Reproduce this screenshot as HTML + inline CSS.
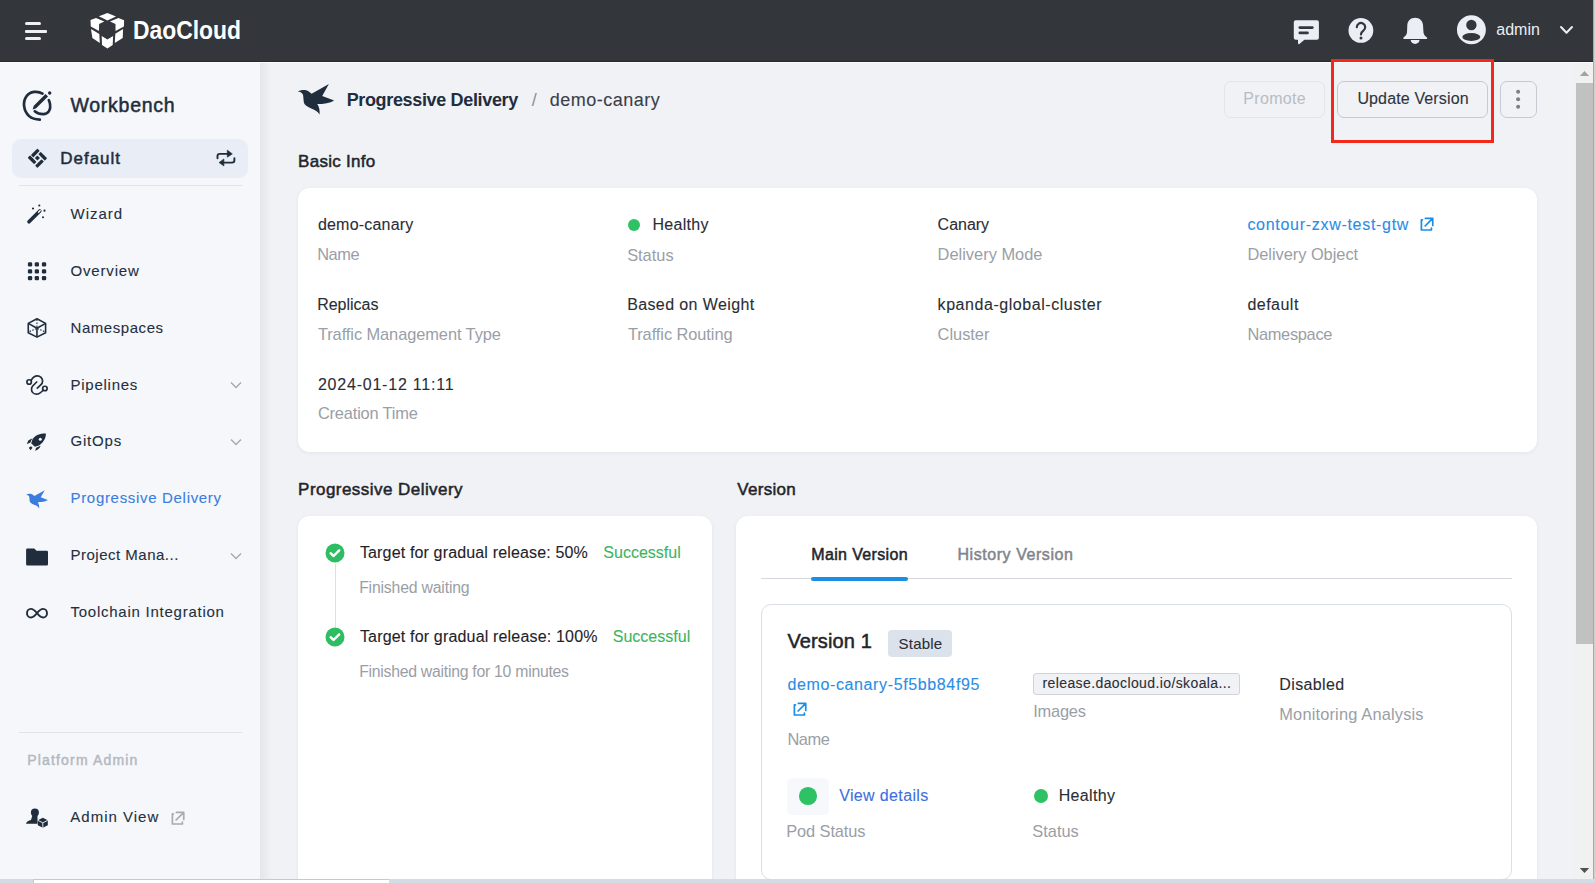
<!DOCTYPE html>
<html><head><meta charset="utf-8">
<style>
*{margin:0;padding:0;box-sizing:border-box}
html,body{width:1595px;height:883px;overflow:hidden;background:#f0f2f6;font-family:"Liberation Sans", sans-serif}
.t{position:absolute;white-space:nowrap;line-height:1}
.a{position:absolute}
</style></head><body>
<!-- header -->
<div class="a" style="left:0;top:0;width:1595px;height:61px;background:#33363b"></div>
<div class="a" style="left:0;top:61px;width:1595px;height:1px;background:#26282c"></div>
<div class="a" style="left:0;top:62px;width:1595px;height:1px;background:#fdfdfe"></div>
<!-- hamburger -->
<div class="a" style="left:25px;top:22px;width:16px;height:3px;border-radius:1.5px;background:#eef0f6"></div>
<div class="a" style="left:25px;top:30px;width:22px;height:2.5px;border-radius:1px;background:#eef0f6"></div>
<div class="a" style="left:25px;top:37px;width:16px;height:3px;border-radius:1.5px;background:#eef0f6"></div>
<!-- logo cube -->
<svg class="a" style="left:86px;top:10px" width="42" height="42" viewBox="0 0 42 42">
<g fill="#ffffff">
<polygon points="12.9,6.2 21.4,2.9 30,6.4 21.4,10.5"/>
<polygon points="4.5,10 10,7.9 18.3,11.4 13.1,14 13,21 4.8,16.4"/>
<polygon points="24,11.4 32.4,7.9 38.1,10.2 37.9,16.4 29.5,21 29.5,14"/>
<polygon points="5,19 13.3,24 13.8,32.9 6.4,28.1"/>
<polygon points="37.1,19 36.7,28.1 28.8,32.9 29.3,23.8"/>
<polygon points="15.7,26 21.4,29.5 27.1,26 26.7,35 21.4,38.6 16,35"/>
</g></svg>
<!-- header right icons -->
<svg class="a" style="left:1290px;top:15px" width="34" height="32" viewBox="0 0 34 32">
<path d="M5.8,5.3 h21.1 a2,2 0 0 1 2,2 v15.5 a2,2 0 0 1 -2,2 h-12.5 l-5,4.1 c-0.6,0.5 -1.4,0.2 -1.4,-0.6 v-3.5 h-2.2 a2,2 0 0 1 -2,-2 v-15.5 a2,2 0 0 1 2,-2 z" fill="#eceef5"/>
<rect x="8.5" y="11.3" width="15.2" height="2.6" rx="1.3" fill="#33363b"/>
<rect x="8.5" y="16.6" width="10.3" height="2.6" rx="1.3" fill="#33363b"/>
</svg>
<svg class="a" style="left:1346px;top:16px" width="30" height="30" viewBox="0 0 30 30">
<circle cx="14.9" cy="14.4" r="12.4" fill="#eceef5"/>
<path d="M10.8,11.2 a4.2,4.2 0 1 1 6.6,3.4 c-1.6,1.1 -2.4,1.8 -2.4,3.8" fill="none" stroke="#33363b" stroke-width="2.2" stroke-linecap="round"/>
<circle cx="15" cy="22" r="1.5" fill="#33363b"/>
</svg>
<svg class="a" style="left:1400px;top:14px" width="32" height="32" viewBox="0 0 32 32">
<path d="M15.1,3.7 C11,3.7 7.6,6.5 7.3,11 L7,18.5 C6.8,20.5 5,22.5 3.5,23.6 C3,24.1 3.2,24.9 4,24.9 H26.5 C27.3,24.9 27.5,24.1 27,23.6 C25.3,22.5 23.7,20.5 23.5,18.5 L23,11 C22.7,6.5 19.2,3.7 15.1,3.7 Z" fill="#eceef5"/>
<path d="M10.7,26 H19.5 A4.4,3.9 0 0 1 10.7,26 Z" fill="#eceef5"/>
</svg>
<svg class="a" style="left:1455px;top:13px" width="34" height="34" viewBox="0 0 34 34">
<circle cx="16.4" cy="16.75" r="14.45" fill="#eceef5"/>
<circle cx="16.4" cy="12" r="5.2" fill="#33363b"/>
<ellipse cx="16.3" cy="24" rx="9" ry="3.9" fill="#33363b"/>
</svg>
<svg class="a" style="left:1558px;top:24px" width="18" height="12" viewBox="0 0 18 12">
<path d="M3,3 L8.5,8.8 L14,3" fill="none" stroke="#eceef5" stroke-width="2" stroke-linecap="round" stroke-linejoin="round"/>
</svg>

<!-- sidebar -->
<div class="a" style="left:0;top:63px;width:260px;height:816px;background:#f6f7fb"></div>
<div class="a" style="left:260px;top:63px;width:12px;height:816px;background:linear-gradient(to right,rgba(0,0,0,0.05),rgba(0,0,0,0))"></div>
<!-- workbench icon -->
<svg class="a" style="left:18px;top:86px" width="40" height="40" viewBox="0 0 40 40">
<g fill="none" stroke="#1f2d3d" stroke-width="2.7" stroke-linecap="round">
<path d="M24.5,7.6 C20,4.8 12,5 8.3,10.5 C4.5,16 5.5,25 11,30 C14,32.5 18,33.5 21.8,33.6"/>
<path d="M16.8,25.3 C19.5,27.5 22.5,28.3 25.5,28.2 C30,28 32.8,24 32.2,19.5 C32,17.5 31.5,15.5 30.8,14.2"/>
</g>
<path d="M14.6,23.6 L15.8,19.8 L27.6,8 L30,10.4 L18.2,22.2 z" fill="#1f2d3d"/>
<circle cx="31.7" cy="7" r="1.7" fill="#1f2d3d"/>
</svg>
<!-- default pill -->
<div class="a" style="left:12px;top:139px;width:236px;height:39px;border-radius:9px;background:#e9edf5"></div>
<svg class="a" style="left:24px;top:145px" width="26" height="26" viewBox="0 0 26 26">
<g transform="rotate(45 13.4 13)" fill="#1f2d3d">
<rect x="6.75" y="6.35" width="3.3" height="9.1" rx="0.6"/>
<rect x="11.35" y="6.35" width="9.1" height="3.3" rx="0.6"/>
<rect x="17.15" y="10.95" width="3.3" height="9.1" rx="0.6"/>
<rect x="6.35" y="16.35" width="9.1" height="3.3" rx="0.6"/>
<rect x="11.6" y="11.2" width="3.6" height="3.6" rx="0.3"/>
</g></svg>
<svg class="a" style="left:214px;top:148px" width="24" height="20" viewBox="0 0 24 20">
<g fill="none" stroke="#1f2d3d" stroke-width="1.9" stroke-linecap="round">
<path d="M3.5,10.2 V8.2 a2.3,2.3 0 0 1 2.3,-2.3 H14"/>
<path d="M20.4,10.2 V12.3 a2.3,2.3 0 0 1 -2.3,2.3 H9.5"/>
</g>
<polygon points="13.3,2.1 18.3,5.9 13.3,9.2" fill="#1f2d3d" stroke="#1f2d3d" stroke-width="0.6" stroke-linejoin="round"/>
<polygon points="9.9,11 5,14.6 9.9,18" fill="#1f2d3d" stroke="#1f2d3d" stroke-width="0.6" stroke-linejoin="round"/>
</svg>
<div class="a" style="left:19px;top:185px;width:223px;height:1px;background:#dfe2e8"></div>
<!-- wizard -->
<svg class="a" style="left:24px;top:202px" width="26" height="26" viewBox="0 0 26 26">
<path d="M5,19.8 L15.8,9" stroke="#1f2d3d" stroke-width="3.6" stroke-linecap="round"/>
<path d="M14.6,10.2 L16.2,8.6" stroke="#ffffff" stroke-width="1.4" stroke-linecap="round"/>
<circle cx="9" cy="6.5" r="1.1" fill="#1f2d3d"/><circle cx="15.3" cy="3.5" r="1.1" fill="#1f2d3d"/>
<circle cx="20.5" cy="8.7" r="1.1" fill="#1f2d3d"/><circle cx="19" cy="15.3" r="1" fill="#1f2d3d"/>
</svg>
<!-- overview dots -->
<svg class="a" style="left:24px;top:258px" width="26" height="26" viewBox="0 0 26 26" fill="#1f2d3d"><rect x="3.9" y="4.3" width="4.3" height="4.3" rx="1.3"/><rect x="10.7" y="4.3" width="4.3" height="4.3" rx="1.3"/><rect x="17.9" y="4.3" width="4.3" height="4.3" rx="1.3"/><rect x="3.9" y="11.2" width="4.3" height="4.3" rx="1.3"/><rect x="10.7" y="11.2" width="4.3" height="4.3" rx="1.3"/><rect x="17.9" y="11.2" width="4.3" height="4.3" rx="1.3"/><rect x="3.9" y="18.0" width="4.3" height="4.3" rx="1.3"/><rect x="10.7" y="18.0" width="4.3" height="4.3" rx="1.3"/><rect x="17.9" y="18.0" width="4.3" height="4.3" rx="1.3"/></svg>
<!-- namespaces cube -->
<svg class="a" style="left:24px;top:315px" width="26" height="26" viewBox="0 0 26 26">
<g fill="none" stroke="#1f2d3d" stroke-width="1.6" stroke-linejoin="round">
<polygon points="12.96,3.83 21.6,8.4 21.6,17.7 12.96,22.1 4.27,17.7 4.27,8.4"/>
<path d="M4.27,8.4 L12.96,13.25 L21.6,8.4 M12.96,13.25 V22.1"/>
</g>
<path d="M12.96,4.5 V12.5 M5.5,16.5 L12.5,13.5 M20.4,16.5 L13.4,13.5" stroke="#1f2d3d" stroke-width="1.1" stroke-dasharray="1.6 1.4"/>
</svg>
<!-- pipelines -->
<svg class="a" style="left:24px;top:372px" width="26" height="26" viewBox="0 0 26 26">
<g fill="none" stroke="#1f2d3d" stroke-width="1.7" stroke-linecap="round">
<circle cx="5.15" cy="10" r="2.25"/>
<circle cx="20.9" cy="16.5" r="2.25"/>
<path d="M7.1,8.3 C9,5 11,3.9 13.3,3.9 C16.2,3.9 18.6,6.3 18.6,9.2 C18.6,10.8 17.8,12 16.5,13.2 L13.3,16.2"/>
<path d="M12.7,10 L8.7,14 C7.8,15 7.5,16.2 7.5,17.2 C7.5,20 9.8,22.2 12.6,22.2 C14.8,22.2 16.5,21 19,18.2"/>
</g></svg>
<!-- gitops rocket -->
<svg class="a" style="left:24px;top:429px" width="26" height="26" viewBox="0 0 26 26" fill="#1f2d3d">
<path d="M21.9,4.5 C22,9 19.5,13.5 15,16.5 L10.8,17.8 L7.2,14.2 L8.6,10 C11.5,6 16.5,4.3 21.9,4.5 z"/>
<circle cx="16.3" cy="10.2" r="1.5" fill="#f6f7fb"/>
<path d="M2.8,15 C3.6,12 5.5,10 8.2,9.5 L6.2,13.8 z"/>
<path d="M11,21.8 C14,21 16,19.2 16.5,16.8 L12.2,18.8 z"/>
<path d="M4.8,18.8 L7,17.3 L8.5,18.8 L6.5,21.2 z"/>
</svg>
<!-- progressive delivery bird (blue) -->
<svg class="a" style="left:24.86px;top:488.5px" width="26" height="22" viewBox="0 0 43.33 36.67"><path d="M1.9,9.4 C4,8.2 7,7.6 9.2,8.1 C11.5,8.6 13.5,10 15.6,11.8 L32.9,2.1 L26.2,13.9 L38.2,18.4 C34,21 28,22 21.2,22.1 C23,24.5 24,28.5 23.6,32.6 C21.5,29 18.5,27.5 15.2,26.4 C11,24.5 8,22.5 7.9,20.4 C7.3,17 7.5,14 6.8,12.2 C5.8,10.5 4,9.6 1.9,9.4 Z" fill="#3b7ddd"/></svg>
<!-- folder -->
<svg class="a" style="left:24px;top:543.5px" width="26" height="26" viewBox="0 0 26 26">
<path d="M2.1,5.7 a1.2,1.2 0 0 1 1.2,-1.2 h7 l2.2,2.3 h10.3 a1.2,1.2 0 0 1 1.2,1.2 v12.3 a1.2,1.2 0 0 1 -1.2,1.2 h-19.5 a1.2,1.2 0 0 1 -1.2,-1.2 z" fill="#1f2d3d"/>
</svg>
<!-- infinity -->
<svg class="a" style="left:24px;top:600px" width="26" height="26" viewBox="0 0 26 26">
<path d="M13,13.2 C11,10.7 9.5,8.9 7,8.9 C4.5,8.9 3,10.9 3,13.2 C3,15.5 4.5,17.5 7,17.5 C9.5,17.5 11,15.7 13,13.2 C15,10.7 16.5,8.9 19,8.9 C21.5,8.9 23,10.9 23,13.2 C23,15.5 21.5,17.5 19,17.5 C16.5,17.5 15,15.7 13,13.2 z" fill="none" stroke="#1f2d3d" stroke-width="1.9"/>
</svg>
<!-- sidebar chevrons -->
<svg class="a" style="left:228px;top:378px" width="16" height="14" viewBox="0 0 16 14"><path d="M3,4.5 L8,9.5 L13,4.5" fill="none" stroke="#a5aab3" stroke-width="1.5"/></svg>
<svg class="a" style="left:228px;top:435px" width="16" height="14" viewBox="0 0 16 14"><path d="M3,4.5 L8,9.5 L13,4.5" fill="none" stroke="#a5aab3" stroke-width="1.5"/></svg>
<svg class="a" style="left:228px;top:549px" width="16" height="14" viewBox="0 0 16 14"><path d="M3,4.5 L8,9.5 L13,4.5" fill="none" stroke="#a5aab3" stroke-width="1.5"/></svg>
<div class="a" style="left:19px;top:732px;width:223px;height:1px;background:#dfe2e8"></div>
<!-- admin icon -->
<svg class="a" style="left:24px;top:804px" width="26" height="26" viewBox="0 0 26 26">
<circle cx="10.9" cy="8.6" r="4" fill="#1f2d3d"/>
<path d="M8.5,11 h5 v8.8 h-11.5 c0.5,-2 2.5,-3.3 5,-3.7 z" fill="#1f2d3d"/>
<path d="M18.8,13.8 L23.8,16.3 V21.3 L18.8,23.8 L13.8,21.3 V16.3 z" fill="#1f2d3d"/>
<path d="M13.8,16.3 L18.8,18.8 L23.8,16.3 M18.8,18.8 V23.8" fill="none" stroke="#f6f7fb" stroke-width="0.9"/>
</svg>
<svg class="a" style="left:169.00px;top:810.45px" width="18" height="17" viewBox="0 0 18 17"><g fill="none" stroke="#a6abb4" stroke-width="1.7" stroke-linecap="round" stroke-linejoin="round"><path d="M4.4,3.8 H3.4 V14 H13.4 V12.2"/><path d="M7.4,2.4 H14.75 V9.5 M7.1,10 L14,3.1"/></g></svg>

<!-- main -->
<svg class="a" style="left:296px;top:82px" width="42" height="36" viewBox="0 0 42 36"><path d="M1.9,9.4 C4,8.2 7,7.6 9.2,8.1 C11.5,8.6 13.5,10 15.6,11.8 L32.9,2.1 L26.2,13.9 L38.2,18.4 C34,21 28,22 21.2,22.1 C23,24.5 24,28.5 23.6,32.6 C21.5,29 18.5,27.5 15.2,26.4 C11,24.5 8,22.5 7.9,20.4 C7.3,17 7.5,14 6.8,12.2 C5.8,10.5 4,9.6 1.9,9.4 Z" fill="#1f2d3d"/></svg>
<!-- buttons -->
<div class="a" style="left:1224px;top:81px;width:101px;height:37px;border:1px solid #e2e5ea;border-radius:7px"></div>
<div class="a" style="left:1337px;top:81px;width:151px;height:37px;border:1px solid #c5c9d1;border-radius:7px"></div>
<div class="a" style="left:1500px;top:81px;width:37px;height:37px;border:1px solid #c5c9d1;border-radius:7px"></div>
<svg class="a" style="left:1510px;top:85px" width="16" height="28" viewBox="0 0 16 28" fill="#7a7f88">
<circle cx="8.1" cy="6.7" r="2"/><circle cx="8.1" cy="14.2" r="2"/><circle cx="8.1" cy="21.8" r="2"/>
</svg>
<!-- basic info card -->
<div class="a" style="left:298px;top:188px;width:1239px;height:264px;background:#fff;border-radius:12px;box-shadow:0 1px 4px rgba(30,40,60,0.06)"></div>
<div class="a" style="left:628px;top:218.7px;width:12px;height:12px;border-radius:50%;background:#2ec265"></div>
<svg class="a" style="left:1418.00px;top:215.60px" width="18" height="17" viewBox="0 0 18 17"><g fill="none" stroke="#1a8de6" stroke-width="1.7" stroke-linecap="round" stroke-linejoin="round"><path d="M4.4,3.8 H3.4 V14 H13.4 V12.2"/><path d="M7.4,2.4 H14.75 V9.5 M7.1,10 L14,3.1"/></g></svg>
<!-- progressive delivery card -->
<div class="a" style="left:298px;top:516px;width:414px;height:380px;background:#fff;border-radius:12px;box-shadow:0 1px 4px rgba(30,40,60,0.06)"></div>
<div class="a" style="left:335px;top:564px;width:1px;height:63px;background:#dcdfe5"></div>
<svg class="a" style="left:325px;top:543px" width="20" height="20" viewBox="0 0 20 20">
<circle cx="10" cy="10" r="9.5" fill="#2ebd62"/>
<path d="M5.6,10.2 L8.6,13 L14.2,7.4" fill="none" stroke="#fff" stroke-width="2.4" stroke-linecap="round" stroke-linejoin="round"/>
</svg>
<svg class="a" style="left:325px;top:627px" width="20" height="20" viewBox="0 0 20 20">
<circle cx="10" cy="10" r="9.5" fill="#2ebd62"/>
<path d="M5.6,10.2 L8.6,13 L14.2,7.4" fill="none" stroke="#fff" stroke-width="2.4" stroke-linecap="round" stroke-linejoin="round"/>
</svg>
<!-- version card -->
<div class="a" style="left:736px;top:516px;width:801px;height:380px;background:#fff;border-radius:12px;box-shadow:0 1px 4px rgba(30,40,60,0.06)"></div>
<div class="a" style="left:761px;top:578px;width:751px;height:1px;background:#d5d8dd"></div>
<div class="a" style="left:811px;top:576.5px;width:97px;height:4.5px;border-radius:2.5px;background:#1a8fe3"></div>
<div class="a" style="left:761px;top:604px;width:751px;height:276px;border:1px solid #d9dee8;border-radius:10px"></div>
<div class="a" style="left:888px;top:630px;width:64px;height:27px;border-radius:4px;background:#dce2ec"></div>
<svg class="a" style="left:790.90px;top:700.95px" width="18" height="17" viewBox="0 0 18 17"><g fill="none" stroke="#1a8de6" stroke-width="1.7" stroke-linecap="round" stroke-linejoin="round"><path d="M4.4,3.8 H3.4 V14 H13.4 V12.2"/><path d="M7.4,2.4 H14.75 V9.5 M7.1,10 L14,3.1"/></g></svg>
<div class="a" style="left:1033px;top:673px;width:207px;height:22px;border:1px solid #cfd3da;border-radius:3px;background:#f0f2f5"></div>
<div class="a" style="left:787px;top:778px;width:42px;height:37px;border-radius:5px;background:#f6f8fb"></div>
<div class="a" style="left:799.2px;top:787.2px;width:17.5px;height:17.5px;border-radius:50%;background:#2ec265"></div>
<div class="a" style="left:1034px;top:788.8px;width:14.3px;height:14.3px;border-radius:50%;background:#2ec265"></div>

<!-- red highlight -->
<div class="a" style="left:1331px;top:59px;width:163px;height:84px;border:3px solid #f2281a"></div>

<!-- scrollbar -->
<div class="a" style="left:1574px;top:63px;width:19px;height:816px;background:#f1f1f1"></div>
<div class="a" style="left:1576px;top:83px;width:17px;height:561px;background:#c1c1c1"></div>
<svg class="a" style="left:1578px;top:68px" width="13" height="10" viewBox="0 0 13 10"><path d="M1.8,8 L6.5,3 L11.2,8 z" fill="#a3a3a3"/></svg>
<svg class="a" style="left:1578px;top:866px" width="13" height="10" viewBox="0 0 13 10"><path d="M1.8,2 L6.5,7 L11.2,2 z" fill="#505050"/></svg>
<div class="a" style="left:1593px;top:0;width:1px;height:883px;background:#a9a9a9"></div><div class="a" style="left:1594px;top:0;width:1px;height:883px;background:#d0d0d0"></div>
<!-- bottom strip -->
<div class="a" style="left:0;top:879px;width:1595px;height:4px;background:#d3dce5"></div>
<div class="a" style="left:33px;top:879px;width:356px;height:4px;background:#fff;border-top:1px solid #c8c8c8;border-left:1px solid #c8c8c8"></div>

<div class="t" id="logo" style="left:132.80px;top:16.89px;font-size:26.00px;font-weight:700;color:#ffffff;letter-spacing:0.000px;transform:scaleX(0.88);transform-origin:0 0;">DaoCloud</div>
<div class="t" id="admin" style="left:1496.30px;top:21.86px;font-size:16.00px;font-weight:400;color:#eceef4;letter-spacing:0.000px;">admin</div>
<div class="t" id="wb" style="left:70.40px;top:95.89px;font-size:19.50px;font-weight:400;color:#1f2d3d;letter-spacing:0.750px;-webkit-text-stroke:0.5px currentColor;">Workbench</div>
<div class="t" id="def" style="left:60.20px;top:149.81px;font-size:17.00px;font-weight:400;color:#1f2d3d;letter-spacing:1.000px;-webkit-text-stroke:0.5px currentColor;">Default</div>
<div class="t" id="s0" style="left:70.50px;top:206.10px;font-size:15.00px;font-weight:400;color:#24303f;letter-spacing:1.000px;-webkit-text-stroke:0.10px currentColor;">Wizard</div>
<div class="t" id="s1" style="left:70.50px;top:262.90px;font-size:15.00px;font-weight:400;color:#24303f;letter-spacing:0.829px;-webkit-text-stroke:0.10px currentColor;">Overview</div>
<div class="t" id="s2" style="left:70.50px;top:319.70px;font-size:15.00px;font-weight:400;color:#24303f;letter-spacing:0.556px;-webkit-text-stroke:0.10px currentColor;">Namespaces</div>
<div class="t" id="s3" style="left:70.50px;top:376.50px;font-size:15.00px;font-weight:400;color:#24303f;letter-spacing:0.750px;-webkit-text-stroke:0.10px currentColor;">Pipelines</div>
<div class="t" id="s4" style="left:70.50px;top:433.30px;font-size:15.00px;font-weight:400;color:#24303f;letter-spacing:0.800px;-webkit-text-stroke:0.10px currentColor;">GitOps</div>
<div class="t" id="s5" style="left:70.50px;top:490.10px;font-size:15.00px;font-weight:400;color:#3b7ddd;letter-spacing:0.684px;-webkit-text-stroke:0.10px currentColor;">Progressive Delivery</div>
<div class="t" id="s6" style="left:70.50px;top:546.90px;font-size:15.00px;font-weight:400;color:#24303f;letter-spacing:0.500px;-webkit-text-stroke:0.10px currentColor;">Project Mana...</div>
<div class="t" id="s7" style="left:70.50px;top:603.70px;font-size:15.00px;font-weight:400;color:#24303f;letter-spacing:0.750px;-webkit-text-stroke:0.10px currentColor;">Toolchain Integration</div>
<div class="t" id="padm" style="left:27.30px;top:753.05px;font-size:14.00px;font-weight:400;color:#b3b8c2;letter-spacing:1.162px;-webkit-text-stroke:0.45px currentColor;">Platform Admin</div>
<div class="t" id="adv" style="left:70.30px;top:809.00px;font-size:15.00px;font-weight:400;color:#24303f;letter-spacing:1.000px;-webkit-text-stroke:0.10px currentColor;">Admin View</div>
<div class="t" id="bc1" style="left:346.64px;top:90.76px;font-size:18.00px;font-weight:700;color:#1f2d3d;letter-spacing:-0.342px;">Progressive Delivery</div>
<div class="t" id="bc2" style="left:531.80px;top:90.76px;font-size:18.00px;font-weight:400;color:#8a8f99;letter-spacing:0.000px;">/</div>
<div class="t" id="bc3" style="left:549.70px;top:90.76px;font-size:18.00px;font-weight:400;color:#3a3f48;letter-spacing:0.510px;-webkit-text-stroke:0.10px currentColor;">demo-canary</div>
<div class="t" id="prom" style="left:1243.30px;top:90.66px;font-size:16.00px;font-weight:400;color:#b9bcc3;letter-spacing:0.333px;">Promote</div>
<div class="t" id="upd" style="left:1357.40px;top:90.66px;font-size:16.00px;font-weight:400;color:#2f343c;letter-spacing:0.138px;-webkit-text-stroke:0.10px currentColor;">Update Version</div>
<div class="t" id="basic" style="left:298.10px;top:153.11px;font-size:17.00px;font-weight:400;color:#22252b;letter-spacing:0.278px;-webkit-text-stroke:0.5px currentColor;">Basic Info</div>
<div class="t" id="f1" style="left:317.90px;top:217.26px;font-size:16.00px;font-weight:400;color:#2a2e35;letter-spacing:0.210px;-webkit-text-stroke:0.10px currentColor;">demo-canary</div>
<div class="t" id="l1" style="left:317.13px;top:245.92px;font-size:16.40px;font-weight:400;color:#9a9ea6;letter-spacing:-0.400px;">Name</div>
<div class="t" id="f2" style="left:652.47px;top:217.26px;font-size:16.00px;font-weight:400;color:#2a2e35;letter-spacing:0.283px;-webkit-text-stroke:0.10px currentColor;">Healthy</div>
<div class="t" id="l2" style="left:627.13px;top:246.92px;font-size:16.40px;font-weight:400;color:#9a9ea6;letter-spacing:0.000px;">Status</div>
<div class="t" id="f3" style="left:937.60px;top:217.26px;font-size:16.00px;font-weight:400;color:#2a2e35;letter-spacing:-0.020px;-webkit-text-stroke:0.10px currentColor;">Canary</div>
<div class="t" id="l3" style="left:937.60px;top:246.12px;font-size:16.40px;font-weight:400;color:#9a9ea6;letter-spacing:0.008px;">Delivery Mode</div>
<div class="t" id="f4" style="left:1247.40px;top:217.06px;font-size:16.00px;font-weight:400;color:#2a8de6;letter-spacing:0.705px;-webkit-text-stroke:0.10px currentColor;">contour-zxw-test-gtw</div>
<div class="t" id="l4" style="left:1247.40px;top:246.12px;font-size:16.40px;font-weight:400;color:#9a9ea6;letter-spacing:-0.029px;">Delivery Object</div>
<div class="t" id="f5" style="left:317.13px;top:297.36px;font-size:16.00px;font-weight:400;color:#2a2e35;letter-spacing:0.000px;-webkit-text-stroke:0.10px currentColor;">Replicas</div>
<div class="t" id="l5" style="left:317.90px;top:326.12px;font-size:16.40px;font-weight:400;color:#9a9ea6;letter-spacing:-0.073px;">Traffic Management Type</div>
<div class="t" id="f6" style="left:627.13px;top:297.36px;font-size:16.00px;font-weight:400;color:#2a2e35;letter-spacing:0.393px;-webkit-text-stroke:0.10px currentColor;">Based on Weight</div>
<div class="t" id="l6" style="left:627.90px;top:326.12px;font-size:16.40px;font-weight:400;color:#9a9ea6;letter-spacing:-0.071px;">Traffic Routing</div>
<div class="t" id="f7" style="left:937.60px;top:297.36px;font-size:16.00px;font-weight:400;color:#2a2e35;letter-spacing:0.550px;-webkit-text-stroke:0.10px currentColor;">kpanda-global-cluster</div>
<div class="t" id="l7" style="left:937.60px;top:326.12px;font-size:16.40px;font-weight:400;color:#9a9ea6;letter-spacing:-0.017px;">Cluster</div>
<div class="t" id="f8" style="left:1247.40px;top:297.36px;font-size:16.00px;font-weight:400;color:#2a2e35;letter-spacing:0.483px;-webkit-text-stroke:0.10px currentColor;">default</div>
<div class="t" id="l8" style="left:1247.40px;top:326.12px;font-size:16.40px;font-weight:400;color:#9a9ea6;letter-spacing:-0.300px;">Namespace</div>
<div class="t" id="f9" style="left:317.90px;top:377.36px;font-size:16.00px;font-weight:400;color:#2a2e35;letter-spacing:0.787px;-webkit-text-stroke:0.10px currentColor;">2024-01-12 11:11</div>
<div class="t" id="l9" style="left:317.90px;top:405.22px;font-size:16.40px;font-weight:400;color:#9a9ea6;letter-spacing:-0.167px;">Creation Time</div>
<div class="t" id="pd" style="left:298.10px;top:480.91px;font-size:17.00px;font-weight:400;color:#22252b;letter-spacing:0.453px;-webkit-text-stroke:0.5px currentColor;">Progressive Delivery</div>
<div class="t" id="ver" style="left:737.20px;top:480.91px;font-size:17.00px;font-weight:400;color:#22252b;letter-spacing:0.317px;-webkit-text-stroke:0.5px currentColor;">Version</div>
<div class="t" id="tg1" style="left:359.90px;top:544.76px;font-size:16.00px;font-weight:400;color:#1f2329;letter-spacing:0.153px;-webkit-text-stroke:0.10px currentColor;">Target for gradual release: 50%</div>
<div class="t" id="su1" style="left:603.30px;top:544.76px;font-size:16.00px;font-weight:400;color:#3bb560;letter-spacing:0.011px;-webkit-text-stroke:0.10px currentColor;">Successful</div>
<div class="t" id="fw1" style="left:359.13px;top:579.53px;font-size:15.80px;font-weight:400;color:#9a9ea6;letter-spacing:-0.187px;">Finished waiting</div>
<div class="t" id="tg2" style="left:359.90px;top:628.76px;font-size:16.00px;font-weight:400;color:#1f2329;letter-spacing:0.174px;-webkit-text-stroke:0.10px currentColor;">Target for gradual release: 100%</div>
<div class="t" id="su2" style="left:612.70px;top:628.76px;font-size:16.00px;font-weight:400;color:#3bb560;letter-spacing:0.022px;-webkit-text-stroke:0.10px currentColor;">Successful</div>
<div class="t" id="fw2" style="left:359.13px;top:663.63px;font-size:15.80px;font-weight:400;color:#9a9ea6;letter-spacing:-0.263px;">Finished waiting for 10 minutes</div>
<div class="t" id="mv" style="left:811.20px;top:546.76px;font-size:16.00px;font-weight:400;color:#22252b;letter-spacing:0.364px;-webkit-text-stroke:0.5px currentColor;">Main Version</div>
<div class="t" id="hv" style="left:957.50px;top:546.76px;font-size:16.00px;font-weight:400;color:#80858d;letter-spacing:0.557px;-webkit-text-stroke:0.5px currentColor;">History Version</div>
<div class="t" id="v1" style="left:787.40px;top:631.37px;font-size:20.00px;font-weight:400;color:#22252b;letter-spacing:0.125px;-webkit-text-stroke:0.5px currentColor;">Version 1</div>
<div class="t" id="stb" style="left:898.60px;top:635.60px;font-size:15.00px;font-weight:400;color:#2a2e35;letter-spacing:0.200px;-webkit-text-stroke:0.10px currentColor;">Stable</div>
<div class="t" id="dc" style="left:787.40px;top:677.06px;font-size:16.00px;font-weight:400;color:#2a8de6;letter-spacing:0.629px;-webkit-text-stroke:0.10px currentColor;">demo-canary-5f5bb84f95</div>
<div class="t" id="nm" style="left:787.40px;top:731.32px;font-size:16.40px;font-weight:400;color:#9a9ea6;letter-spacing:-0.400px;">Name</div>
<div class="t" id="img" style="left:1042.50px;top:675.95px;font-size:14.00px;font-weight:400;color:#2a2e35;letter-spacing:0.393px;-webkit-text-stroke:0.10px currentColor;">release.daocloud.io/skoala...</div>
<div class="t" id="imgl" style="left:1033.20px;top:703.12px;font-size:16.40px;font-weight:400;color:#9a9ea6;letter-spacing:-0.200px;">Images</div>
<div class="t" id="dis" style="left:1279.30px;top:676.76px;font-size:16.00px;font-weight:400;color:#2a2e35;letter-spacing:0.371px;-webkit-text-stroke:0.10px currentColor;">Disabled</div>
<div class="t" id="mon" style="left:1279.30px;top:705.72px;font-size:16.40px;font-weight:400;color:#9a9ea6;letter-spacing:0.167px;">Monitoring Analysis</div>
<div class="t" id="vd" style="left:839.20px;top:788.26px;font-size:16.00px;font-weight:400;color:#3d6fe0;letter-spacing:0.364px;-webkit-text-stroke:0.10px currentColor;">View details</div>
<div class="t" id="hl" style="left:1058.70px;top:788.26px;font-size:16.00px;font-weight:400;color:#2a2e35;letter-spacing:0.333px;-webkit-text-stroke:0.10px currentColor;">Healthy</div>
<div class="t" id="ps" style="left:786.30px;top:822.92px;font-size:16.40px;font-weight:400;color:#9a9ea6;letter-spacing:-0.111px;">Pod Status</div>
<div class="t" id="st" style="left:1032.30px;top:822.92px;font-size:16.40px;font-weight:400;color:#9a9ea6;letter-spacing:0.000px;">Status</div>
</body></html>
